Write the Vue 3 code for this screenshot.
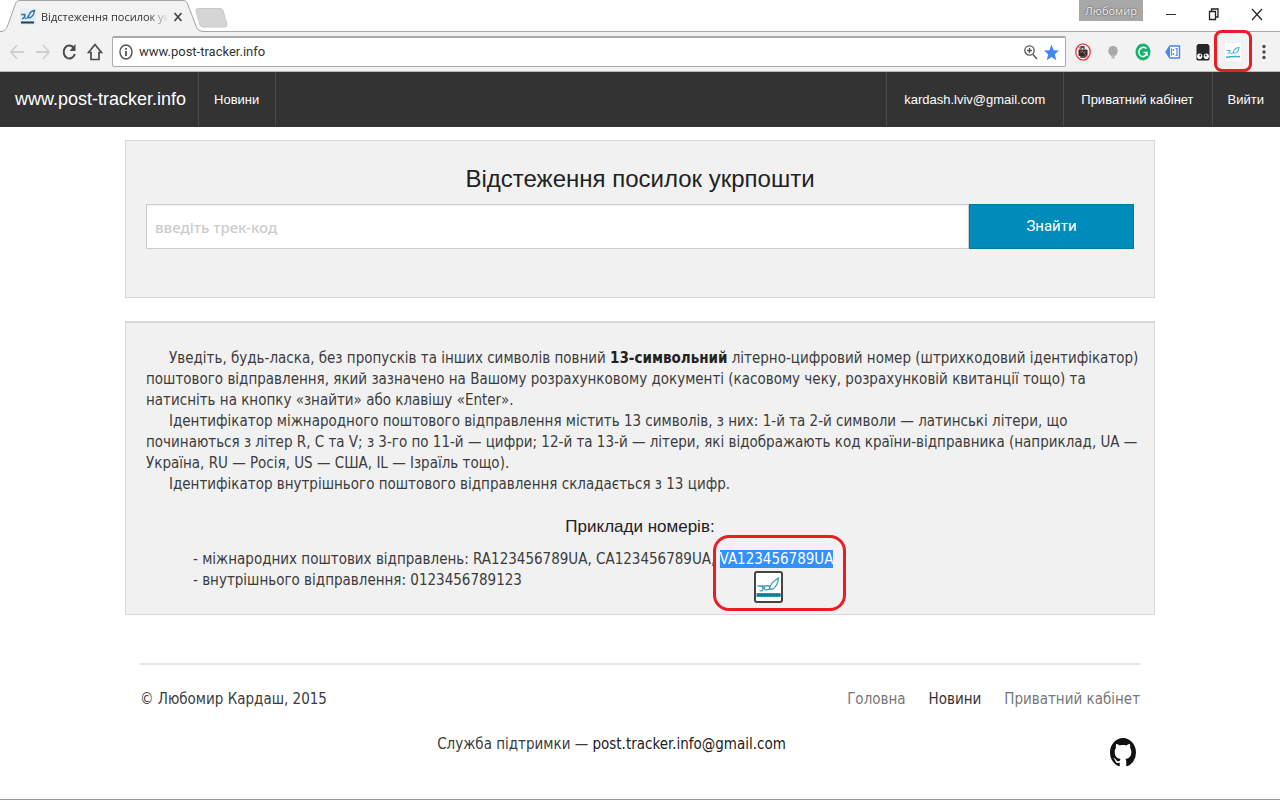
<script setup>
import { ref } from 'vue'

const address = ref('www.post-tracker.info')
const code = ref('')
</script>

<template>
  <div class="window">
    <header class="chrome">
      <div class="strip">
        <div class="tab">
          <svg class="tab-shape" viewBox="0 0 206 32" aria-hidden="true">
            <path d="M0 31.5C4 31.5 6 30 7.500 26L15 5C16 2 17 .5 20 .5H183C186 .5 187 2 188 5L196 26C197.500 30 199 31.500 206 31.500V32H0Z" fill="#f2f2f2" />
            <path d="M0 31.500C4 31.500 6 30 7.500 26L15 5C16 2 17 .5 20 .5H183C186 .5 187 2 188 5L196 26C197.500 30 199 31.500 206 31.500" fill="none" stroke="#a3a3a3" />
          </svg>
          <svg class="favicon" viewBox="0 0 16 16" aria-hidden="true">
            <path fill="#e3edf3" d="M0 0h16v16H0z" />
            <path d="M1 5.500h4.500q-2 .5-.5 1.500-1 3-3 2.500M5 9.500q3.500 0 4-3.500 1.500-4 5.500-4.500-.5 5-4 7-3 1-2.500-2" fill="none" stroke="#2877a6" stroke-width="1.400" />
            <path d="M1 13.500h13" stroke="#173f66" stroke-width="2" />
          </svg>
          <span class="tab-title">Відстеження посилок ук</span>
          <button class="bare tab-close" aria-label="Закрити вкладку">
            <svg width="10" height="12" viewBox="0 0 10 12"><path d="M1.500 2l7 8m0-8l-7 8" stroke="#444" stroke-width="1.700" /></svg>
          </button>
        </div>
        <button class="bare new-tab" aria-label="Нова вкладка">
          <svg width="34" height="20" viewBox="0 0 34 20"><path d="M3 .5H25q2 0 3 2l4 14q0 2.500-2 2.500H8q-2 0-3-2L1 3Q.5 .5 3 .5Z" fill="#d5d5d5" stroke="#c8c8c8" /></svg>
        </button>
        <div class="window-controls">
          <span class="profile">Любомир</span>
          <button class="bare" aria-label="Згорнути"><svg width="12" height="14" viewBox="0 0 12 14"><path d="M1 7.500h10" stroke="#333" /></svg></button>
          <button class="bare" aria-label="Відновити"><svg width="12" height="14" viewBox="0 0 12 14"><path d="M1.500 4.500h6v8h-6zM3.500 4V2h6.500v8H8" fill="none" stroke="#222" stroke-width="1.300" /></svg></button>
          <button class="bare" aria-label="Закрити"><svg width="12" height="14" viewBox="0 0 12 14"><path d="M1 2l10 11M11 2L1 13" stroke="#222" stroke-width="1.200" /></svg></button>
        </div>
      </div>

      <div class="toolbar">
        <div class="history">
          <button class="bare" aria-label="Назад"><svg width="16" height="18" viewBox="0 0 16 18"><path d="M15 9H2m6-7L2 9l6 7" fill="none" stroke="#cfcfcf" stroke-width="1.800" /></svg></button>
          <button class="bare" aria-label="Вперед"><svg width="16" height="18" viewBox="0 0 16 18"><path d="M1 9h13M8 2l6 7-6 7" fill="none" stroke="#cfcfcf" stroke-width="1.800" /></svg></button>
          <button class="bare" aria-label="Оновити"><svg width="16" height="18" viewBox="0 0 16 18"><path d="M12.500 4.500A5.700 6.500 0 1 0 13.800 11" fill="none" stroke="#4b4b4b" stroke-width="2" /><path d="M14.500 1v7H8.500z" fill="#4b4b4b" /></svg></button>
          <button class="bare" aria-label="Додому"><svg width="16" height="18" viewBox="0 0 16 18"><path d="M8 1.500L1.500 9.500H4v7h8v-7h2.500z" fill="none" stroke="#4b4b4b" stroke-width="1.700" /></svg></button>
        </div>
        <div class="omnibox">
          <svg width="14" height="16" viewBox="0 0 14 16" aria-hidden="true"><ellipse cx="7" cy="8" rx="6" ry="7" fill="none" stroke="#555" stroke-width="1.400" /><path d="M7 7v5M7 4v1.700" stroke="#444" stroke-width="1.700" /></svg>
          <input v-model="address" class="url" aria-label="Адреса" />
          <svg width="14" height="16" viewBox="0 0 14 16" aria-hidden="true"><circle cx="5.500" cy="6.500" r="4.700" fill="none" stroke="#555" stroke-width="1.300" /><path d="M9 10.500l4 4.500M3 6.500h5M5.500 4v5" stroke="#555" stroke-width="1.400" /></svg>
          <svg width="15" height="17" viewBox="0 0 15 17" aria-hidden="true"><path d="M7.500 .5l2 5.700 5.500.3-4.200 3.800 1.400 6-4.700-3.300-4.700 3.300 1.400-6L0 6.500l5.500-.3z" fill="#4285f4" /></svg>
        </div>
        <div class="extensions">
          <svg viewBox="0 0 16 18"><rect x="3.500" y="6.500" width="9" height="6.500" rx="1" fill="#2b2b2b" /><path d="M6 6V4h3v2M6 13v1h4v-1" fill="none" stroke="#2b2b2b" stroke-width="1.300" /><path d="M5.500 9h1.500m2 0h1.500" stroke="#999" /><ellipse cx="8" cy="9" rx="7.200" ry="8.100" fill="none" stroke="#ec3b3f" stroke-width="1.300" /><path d="M3 3l10 12" stroke="#ec3b3f" /></svg>
          <svg viewBox="0 0 16 18"><ellipse cx="8" cy="8" rx="4.700" ry="5.200" fill="#a9a9a9" /><path d="M6.500 12h3v3.500h-3z" fill="#b8b8b8" /></svg>
          <svg viewBox="0 0 16 18"><ellipse cx="8" cy="9" rx="7.500" ry="8.500" fill="#13b36b" /><path d="M11.500 5.500Q8 2.500 5 6q-2.200 3.500.2 6.500Q9 15.500 12 10.500" fill="none" stroke="#fff" stroke-width="1.500" /><path d="M8.500 9.500H12V13" fill="none" stroke="#fff" stroke-width="1.300" /></svg>
          <svg viewBox="0 0 16 18"><path d="M5 3h9.500v12H5L1 9z" fill="#fff" stroke="#4285f4" stroke-width="1.400" stroke-linejoin="round" /><path d="M5 3.500v11L1.500 9z" fill="#4285f4" /><path d="M8.500 6v2m0 2v2m2-6.500h1.500v7h-1.500M6.500 5.500v7" fill="none" stroke="#4285f4" stroke-width="1.200" /></svg>
          <svg viewBox="0 0 16 18"><path d="M3 1h10l1.500 2v13q0 1.500-2 1.500h-9q-2 0-2-1.500V3z" fill="#272727" /><ellipse cx="4.700" cy="13.200" rx="2.600" ry="2.800" fill="#fff" /><ellipse cx="11.300" cy="13.200" rx="2.600" ry="2.800" fill="#fff" /><circle cx="5.300" cy="12.500" r=".9" fill="#222" /><circle cx="10.700" cy="12.500" r=".9" fill="#222" /></svg>
          <span class="marked">
            <svg viewBox="0 0 16 18"><path fill="#fff" d="M0 0h16v18H0z" /><path d="M1.500 7.500h4q-1.500.3-.5 1.200-1 2-2.500 1.500M5.500 10.500q3 0 3.500-3 1.500-3 5-3-.5 4.500-3.500 5.500-2.500.5-2-1.500" fill="none" stroke="#50b3dc" stroke-width="1.100" /><path d="M1 14.200q7-1 14-.5" fill="none" stroke="#3aa9dc" stroke-width="1.500" /></svg>
          </span>
          <button class="bare" aria-label="Меню"><svg class="dots" viewBox="0 0 6 18"><circle cx="3" cy="3.500" r="1.700" fill="#4b4b4b" /><circle cx="3" cy="9" r="1.700" fill="#4b4b4b" /><circle cx="3" cy="14.500" r="1.700" fill="#4b4b4b" /></svg></button>
        </div>
      </div>
    </header>

    <nav class="nav">
      <a href="#" class="brand">www.post-tracker.info</a>
      <a href="#" class="item short first">Новини</a>
      <span class="spacer"></span>
      <a href="#" class="item">kardash.lviv@gmail.com</a>
      <a href="#" class="item">Приватний кабінет</a>
      <a href="#" class="item short">Вийти</a>
    </nav>

    <main>
      <section class="panel search">
        <h1>Відстеження посилок укрпошти</h1>
        <form class="search-row" @submit.prevent>
          <input v-model="code" class="code" placeholder="введіть трек-код" aria-label="Трек-код" />
          <button class="find">Знайти</button>
        </form>
      </section>

      <section class="panel info">
        <p>Уведіть, будь-ласка, без пропусків та інших символів повний <strong>13-символьний</strong> літерно-цифровий номер (штрихкодовий ідентифікатор)<br />поштового відправлення, який зазначено на Вашому розрахунковому документі (касовому чеку, розрахунковій квитанції тощо) та<br />натисніть на кнопку «знайти» або клавішу «Enter».</p>
        <p>Ідентифікатор міжнародного поштового відправлення містить 13 символів, з них: 1-й та 2-й символи — латинські літери, що<br />починаються з літер R, C та V; з 3-го по 11-й — цифри; 12-й та 13-й — літери, які відображають код країни-відправника (наприклад, UA —<br />Україна, RU — Росія, US — США, IL — Ізраїль тощо).</p>
        <p>Ідентифікатор внутрішнього поштового відправлення складається з 13 цифр.</p>
        <h2>Приклади номерів:</h2>
        <ul>
          <li>- міжнародних поштових відправлень: RA123456789UA, CA123456789UA, <span class="picked"><mark>VA123456789UA</mark><span class="ring"></span><button class="bare popup" aria-label="Відстежити"><svg viewBox="0 0 24 28"><path d="M1 13h6q-3 2 0 2-1 4-4 2.500M13 13q-5-1-5 2t5 1M13 17q0-7 9-12-1 8-5 10.500-3 2-4-1" fill="none" stroke="#3a9dac" stroke-width="1.300" /><path d="M0 22h24" stroke="#19a0b2" stroke-width="4" /><path d="M1 22h23" stroke="#116f80" stroke-width="2" stroke-dasharray="2 1" /></svg></button></span></li>
          <li>- внутрішнього відправлення: 0123456789123</li>
        </ul>
      </section>
    </main>

    <footer>
      <div class="footer-row">
        <span>© Любомир Кардаш, 2015</span>
        <div class="footer-links">
          <a href="#">Головна</a>
          <a href="#" class="current">Новини</a>
          <a href="#">Приватний кабінет</a>
        </div>
      </div>
      <div class="support">
        <span>Служба підтримки — <a href="#">post.tracker.info@gmail.com</a></span>
        <a href="#" class="github" aria-label="GitHub"><svg viewBox="0 0 16 16" preserveAspectRatio="none"><path fill="#111" d="M8 0C3.580 0 0 3.580 0 8c0 3.540 2.290 6.530 5.470 7.590.4.070.55-.17.55-.38 0-.19-.01-.82-.01-1.490-2.010.37-2.530-.49-2.690-.94-.09-.23-.48-.94-.82-1.130-.28-.15-.68-.52-.01-.53.63-.01 1.080.58 1.230.82.72 1.210 1.870.87 2.330.66.070-.52.28-.87.51-1.070-1.780-.2-3.640-.89-3.640-3.950 0-.87.31-1.590.82-2.150-.08-.2-.36-1.020.08-2.120 0 0 .67-.21 2.200.82.64-.18 1.320-.27 2-.27s1.360.09 2 .27c1.530-1.040 2.200-.82 2.200-.82.44 1.100.16 1.920.08 2.120.51.56.82 1.270.82 2.150 0 3.070-1.870 3.750-3.650 3.950.29.25.54.73.54 1.480 0 1.070-.01 1.930-.01 2.200 0 .21.15.46.55.38A8.010 8.010 0 0 0 16 8c0-4.420-3.580-8-8-8z" /></svg></a>
      </div>
    </footer>
  </div>
</template>

<style>
body { background: #fff; }
</style>

<style scoped>
* { box-sizing: border-box; }
.window { min-height: 100vh; display: flex; flex-direction: column; border-bottom: 1px solid #999; font: 15px/21px "DejaVu Sans Condensed", "Noto Sans", sans-serif; color: #3c3c3c; }
a { color: inherit; text-decoration: none; }
.bare { border: 0; padding: 0; background: none; display: flex; align-items: center; justify-content: center; }
svg { display: block; flex: none; }
.strip { height: 32px; display: flex; border-bottom: 1px solid #a9a9a9; }
.tab { position: relative; width: 206px; height: 32px; padding: 1px 23px 0 20px; display: flex; align-items: center; flex: none; }
.tab-shape { position: absolute; inset: 0; width: 206px; height: 32px; }
.favicon { position: relative; width: 16px; height: 16px; margin-right: 5px; }
.tab-title { position: relative; flex: 1; min-width: 0; white-space: nowrap; font: 11px/21px "Open Sans", sans-serif; color: #333; mask-image: linear-gradient(to right, #000 85%, transparent); }
.tab-close { position: relative; width: 10px; margin: 0 0 0 5px; }
.new-tab { height: 19px; margin: 8px 0 0 -11px; position: relative; }
.window-controls { margin-left: auto; display: flex; align-items: flex-start; gap: 31px; padding-right: 17px; }
.window-controls .bare { height: 28px; }
.profile { background: #a8a8a8; color: #f2f2f2; text-shadow: 0 0 2px #333; font: 11px/21px "Open Sans", sans-serif; width: 64px; text-align: center; margin-right: -9px; }
.toolbar { height: 40px; padding: 4px 13px 4px 9px; display: flex; align-items: center; background: #f2f2f2; border-bottom: 1px solid #bbb; }
.history { display: flex; gap: 10px; margin-right: 9px; }
.omnibox { flex: 1; height: 31px; display: flex; align-items: center; gap: 6px; padding: 0 6px; background: #fff; border: 1px solid #aaa; border-top-width: 2px; border-radius: 2px; }
.url { flex: 1; min-width: 0; border: 0; outline: 0; padding: 0; background: none; font: 13px/20px Roboto, sans-serif; color: #333; }
.extensions { display: flex; align-items: center; gap: 14px; margin-left: 9px; }
.extensions svg { width: 16px; height: 18px; }
.extensions .dots { width: 6px; margin-left: 6px; }
.marked { position: relative; }
.marked::after { content: ""; position: absolute; inset: -13px -11px -11px; border: 3px solid #ec1c24; border-radius: 8px; z-index: 2; }
.nav { min-height: 55px; display: flex; align-items: stretch; background: #333; color: #fff; font: 13px/55px "Liberation Sans", sans-serif; }
.brand { padding: 0 12px 0 15px; font-size: 18px; }
.item { padding: 0 18px 0 17px; border-left: 1px solid #4b4b4b; }
.short { padding: 0 16px 0 15px; }
.first { border-right: 1px solid #4b4b4b; }
.spacer { flex: 1; }
main { width: 100%; max-width: 1070px; margin: 0 auto; padding: 13px 20px 0; }
.panel { background: #f1f1f1; border: 1px solid #d8d8d8; padding: 21px 20px; }
.search { min-height: 158px; margin-bottom: 23px; }
h1, h2 { margin: 0; text-align: center; color: #222; font-family: "Liberation Sans", sans-serif; font-weight: 400; }
h1 { font-size: 24px; line-height: 34px; margin-bottom: 8px; }
.search-row { display: flex; }
.code { flex: 1; min-width: 0; height: 45px; padding: 0 8px; border: 1px solid #ccc; outline: 0; background: #fff; box-shadow: inset 0 1px 2px #0001; font: 500 15px/21px "Noto Sans", sans-serif; }
.code::placeholder { color: #ccc; opacity: 1; }
.find { width: 165px; height: 45px; border: 1px solid #0079a1; background: #008cba; color: #fff; font: 15px/21px Roboto, sans-serif; }
.info { padding-top: 25px; padding-bottom: 23px; border-top-width: 2px; white-space: nowrap; }
p { margin: 0; text-indent: 23px; }
strong { color: #222; }
h2 { font-size: 17px; line-height: 26px; margin: 19px 0 9px; }
ul { list-style: none; margin: 0; padding: 0 0 0 47px; }
.picked { position: relative; display: inline-block; }
mark { background: #3390ff; color: #fff; }
.ring { position: absolute; left: -7px; top: -14px; width: 133px; height: 76px; border: 3px solid #ec1c24; border-radius: 16px; }
.popup { position: absolute; left: 34px; top: 22px; width: 29px; height: 32px; background: #fff; border: 2px solid #444; border-radius: 3px; }
.popup svg { width: 25px; height: 28px; }
footer { width: 100%; max-width: 1040px; margin: 48px auto 0; padding: 0 20px; }
.footer-row { display: flex; justify-content: space-between; border-top: 2px solid #e6e6e6; padding-top: 24px; }
.footer-links { display: flex; gap: 23px; color: #777; }
.current { color: #333; }
.support { display: flex; justify-content: center; position: relative; margin-top: 24px; padding-right: 57px; }
.support span a { color: #222; }
.github { position: absolute; right: 4px; top: 4px; }
.github svg { width: 26px; height: 29px; }
</style>
